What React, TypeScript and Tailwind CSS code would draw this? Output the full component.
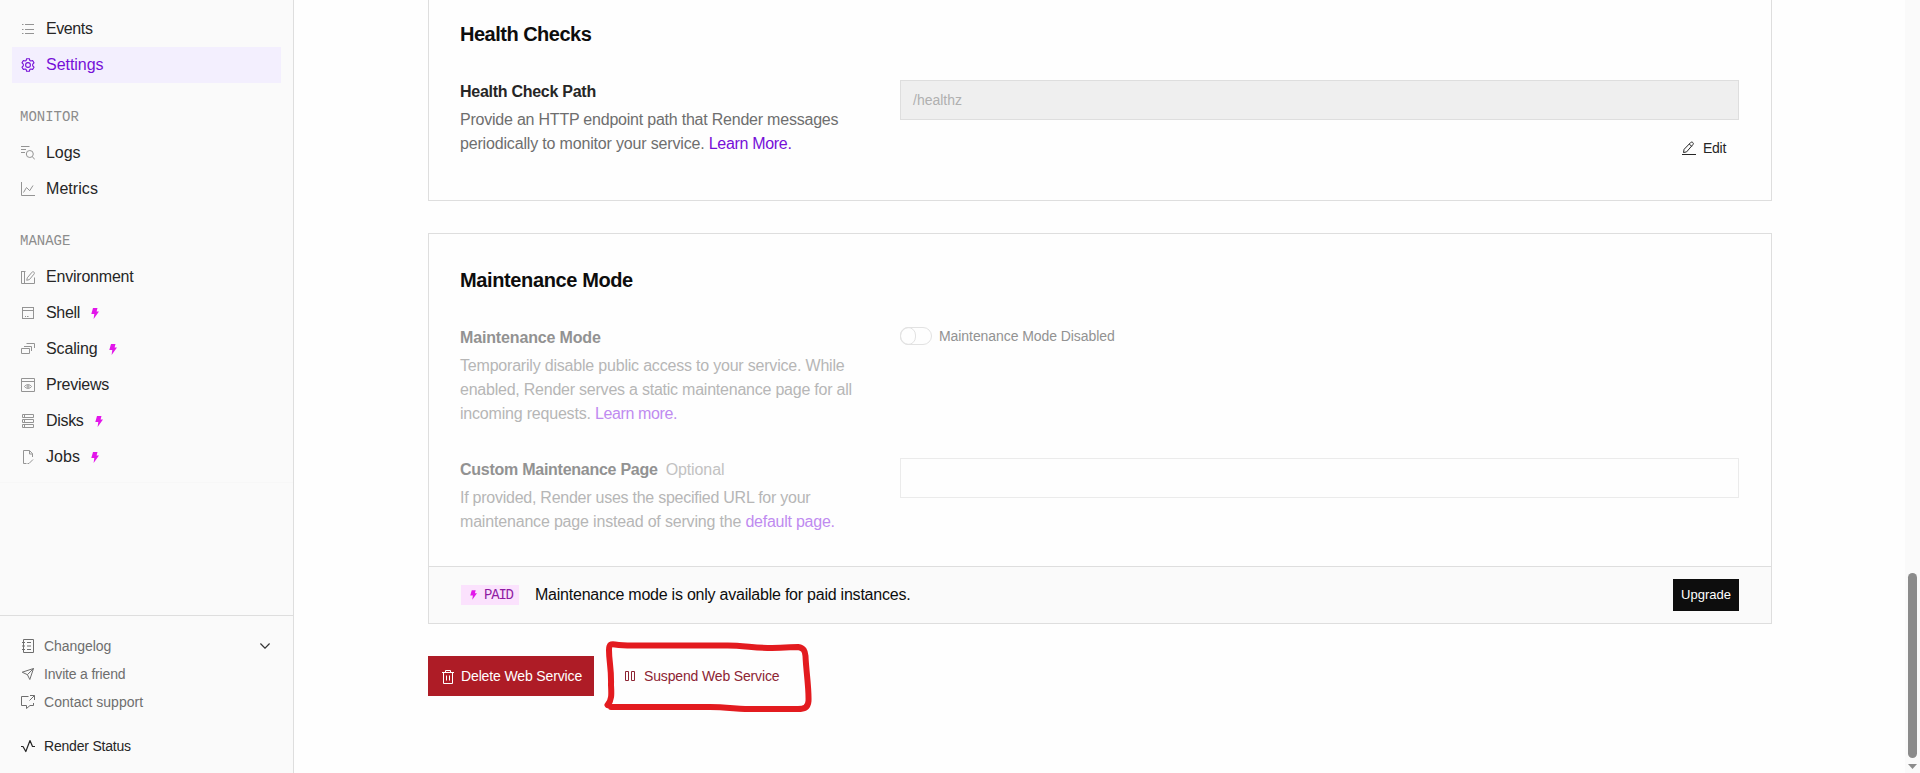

import type { ReactNode } from 'react';

function Icon({ children, className = '', sw = 1 }: { children: ReactNode; className?: string; sw?: number }) {
  return (
    <svg viewBox="0 0 14 14" fill="none" stroke="currentColor" strokeWidth={sw} className={`h-3.5 w-3.5 shrink-0 ${className}`}>
      {children}
    </svg>
  );
}

const EventsIcon = <Icon><path d="M1 2.5h1.5M1 7.5h1.5M1 11.5h1.5M4 2.5h9M4 7.5h9M4 11.5h9" /></Icon>;
const GearIcon = (
  <Icon sw={1.1}>
    <path d="M5.6 .7h2.8l.4 1.7 1.1.6 1.7-.5 1.4 2.4-1.3 1.2v1.8l1.3 1.2-1.4 2.4-1.7-.5-1.1.6-.4 1.7H5.6l-.4-1.7-1.1-.6-1.7.5L1 9.1l1.3-1.2V6.1L1 4.9l1.4-2.4 1.7.5 1.1-.6z" strokeLinejoin="round" />
    <circle cx="7" cy="7" r="2.4" />
  </Icon>
);
const LogsIcon = <Icon><path d="M0 .5h8.5M0 3.5h5M0 6.5h4" /><circle cx="8.8" cy="8" r="3.5" /><path d="M11.3 10.6l2.5 2.9" /></Icon>;
const MetricsIcon = <Icon><path d="M.5 0v13.5H14M2.5 10.5l3-5 3.2 3.2L12 3.5" /></Icon>;
const EnvIcon = <Icon><path d="M3.5 1v12.5M0 1.5h4.5M.5 1v12.5h13V7.5M6.3 7.8l4.6-5.5c.5-.7 1.3-.8 2-.2s.6 1.4.1 2L8.4 9.6l-2.7.7z" /></Icon>;
const ShellIcon = <Icon><rect x="1.5" y="1.5" width="11" height="11" /><path d="M1.5 4.5h11M4 10.5h1M6 10.5h1.5" /></Icon>;
const ScalingIcon = <Icon><path d="M.5 6.5h8v5h-8zM3 4.5h7.5V9M5.5 1.5h8V6" /></Icon>;
const PreviewsIcon = (
  <Icon><path d="M.5 .5h13v13H.5zM.5 3.5h13" /><path d="M3.5 8.5C5 6.1 9 6.1 10.5 8.5 9 10.9 5 10.9 3.5 8.5z" /><circle cx="7" cy="8.5" r=".9" /></Icon>
);
const DisksIcon = <Icon><path d="M1.5 .5h11v3h-11zM1.5 5.5h11v3h-11zM1.5 10.5h11v3h-11zM3.5 .5v3M3.5 5.5v3M3.5 10.5v3" /></Icon>;
const JobsIcon = <Icon><path d="M5.5 13.5h-3V.5h6l3 3.2V7M8.5 .5v3.5h3.2M6.500 13.500h1.500l4-4" /></Icon>;
const ChangelogIcon = <Icon><path d="M2.5 .5h10v13h-10zM1 3.5h3M1 7h3M1 10.5h3M6 3.5h4M6 7h4M6 10.5h4" /></Icon>;
const InviteIcon = <Icon><path d="M1.2 5.2L12.5 1.5 8.8 12.5 6.4 7.7zM6.4 7.7l6.1-6.2" strokeLinejoin="round" /></Icon>;
const SupportIcon = <Icon><path d="M7.5 1.5h-7v9h5v3l3.5-3h3.5V8M9 .5h4.5V5M13.5 .5L8.5 5.5" /></Icon>;
const StatusIcon = <Icon sw={1.2}><path d="M0 7.5h2l2.8 5L9 1.5l2.5 6H14" strokeLinejoin="round" /></Icon>;

function Bolt({ className }: { className: string }) {
  return (
    <svg viewBox="0 0 8 11" className={`shrink-0 text-[#e216ea] ${className}`}>
      <path d="M2 0h4.500L5.600 3.400H8L2.600 11l.7-5H.3z" fill="currentColor" />
    </svg>
  );
}

function NavItem({ icon, label, tracking, active, paid }: { icon: ReactNode; label: string; tracking: string; active?: boolean; paid?: boolean }) {
  return (
    <a className={`mx-3 flex h-9 items-center pl-[9px] ${active ? 'bg-[#f3effe] text-[#760fd8]' : 'text-[#262626]'}`}>
      <span className={active ? '' : 'text-[#949494]'}>{icon}</span>
      <span className={`ml-[11px] text-base leading-6 ${tracking}`}>{label}</span>
      {paid && <Bolt className="ml-[11px] h-[11px] w-[8px]" />}
    </a>
  );
}

function NavLabel({ children }: { children: ReactNode }) {
  return <div className="h-[52px] pt-6 pl-5 font-['Liberation_Mono',monospace] text-sm leading-5 text-[#8c8c8c]">{children}</div>;
}

function FooterItem({ icon, label, className }: { icon: ReactNode; label: string; className: string }) {
  return (
    <a className={`flex h-7 items-center gap-[9px] text-sm ${className}`}>
      {icon}
      <span>{label}</span>
    </a>
  );
}

function Sidebar() {
  return (
    <aside className="flex w-[294px] shrink-0 flex-col border-r border-[#dedede] bg-[#fafafa]">
      <nav className="border-b border-[#f7f7f7] pt-[11px] pb-[7px]">
        <NavItem icon={EventsIcon} label="Events" tracking="tracking-[-0.4px]" />
        <NavItem icon={GearIcon} label="Settings" tracking="tracking-[-0.04px]" active />
        <NavLabel>MONITOR</NavLabel>
        <NavItem icon={LogsIcon} label="Logs" tracking="tracking-[-0.05px]" />
        <NavItem icon={MetricsIcon} label="Metrics" tracking="tracking-[0.06px]" />
        <NavLabel>MANAGE</NavLabel>
        <NavItem icon={EnvIcon} label="Environment" tracking="tracking-[-0.21px]" />
        <NavItem icon={ShellIcon} label="Shell" tracking="tracking-[-0.3px]" paid />
        <NavItem icon={ScalingIcon} label="Scaling" tracking="tracking-[-0.14px]" paid />
        <NavItem icon={PreviewsIcon} label="Previews" tracking="tracking-[-0.24px]" />
        <NavItem icon={DisksIcon} label="Disks" tracking="tracking-[-0.32px]" paid />
        <NavItem icon={JobsIcon} label="Jobs" tracking="tracking-[0.05px]" paid />
      </nav>
      <div className="mt-auto h-[158px] border-t border-[#dedede] pt-4 pr-[23px] pl-[21px]">
        <div className="flex items-center justify-between text-[#6e6e6e]">
          <FooterItem icon={ChangelogIcon} label="Changelog" className="tracking-[-0.05px]" />
          <svg viewBox="0 0 10 6" fill="none" stroke="#333" strokeWidth="1.2" className="h-1.5 w-2.5">
            <path d="M.4 .5L5 5.2 9.6 .5" />
          </svg>
        </div>
        <FooterItem icon={InviteIcon} label="Invite a friend" className="tracking-[-0.18px] text-[#6e6e6e]" />
        <FooterItem icon={SupportIcon} label="Contact support" className="tracking-[0.02px] text-[#6e6e6e]" />
        <FooterItem icon={StatusIcon} label="Render Status" className="mt-4 tracking-[-0.2px] text-[#262626]" />
      </div>
    </aside>
  );
}

function HealthChecks() {
  return (
    <section className="h-[201px] border border-t-0 border-[#dedede] pt-5 pr-8 pl-[31px]">
      <h2 className="text-xl leading-7 font-bold tracking-[-0.5px] text-[#0d0d0d]">Health Checks</h2>
      <div className="mt-8 flex">
        <div className="w-[440px] shrink-0">
          <h3 className="text-base leading-6 font-bold tracking-[-0.27px] text-[#262626]">Health Check Path</h3>
          <p className="mt-1 text-base leading-6 tracking-[-0.22px] whitespace-nowrap text-[#6e6e6e]">
            Provide an HTTP endpoint path that Render messages
            <br />
            <span className="tracking-[-0.17px]">periodically to monitor your service. </span>
            <a className="tracking-[-0.32px] text-[#760fd8]">Learn More.</a>
          </p>
        </div>
        <div className="flex flex-1 flex-col">
          <div className="flex h-10 items-center border border-[#dedede] bg-[#efefef] pl-3 text-sm text-[#b0b0b0]">/healthz</div>
          <button className="mt-3 mr-[13px] flex h-8 items-center gap-[7px] self-end text-sm tracking-[-0.28px] text-[#262626]">
            <Icon>
              <path d="M0 13.500h14M1.500 11.500l.6-3.200 6.600-6.800c.8-.6 1.600-.5 2.200.1s.6 1.300 0 2L4.600 10.900zM7.300 3l2.400 2.400" />
            </Icon>
            Edit
          </button>
        </div>
      </div>
    </section>
  );
}

function MaintenanceMode() {
  return (
    <section className="mt-8 border border-[#dedede]">
      <div className="py-8 pr-8 pl-[31px]">
        <h2 className="text-xl leading-7 font-bold tracking-[-0.38px] text-[#0d0d0d]">Maintenance Mode</h2>
        <div className="mt-8 flex items-start">
          <div className="w-[440px] shrink-0">
            <h3 className="text-base leading-6 font-bold tracking-[-0.15px] text-[#929292]">Maintenance Mode</h3>
            <p className="mt-1 text-base leading-6 whitespace-nowrap text-[#b6b6b6]">
              <span className="tracking-[-0.2px]">Temporarily disable public access to your service. While</span>
              <br />
              <span className="tracking-[-0.23px]">enabled, Render serves a static maintenance page for all</span>
              <br />
              <span className="tracking-[-0.2px]">incoming requests. </span>
              <a className="tracking-[-0.37px] text-[#bf8bf0]">Learn more.</a>
            </p>
          </div>
          <div className="flex h-5 items-center gap-[7px]">
            <span className="flex h-[18px] w-8 rounded-full border border-[#e2e2e2]">
              <span className="-mt-px -ml-px h-[18px] w-4 rounded-full border border-[#e2e2e2]" />
            </span>
            <span className="text-sm tracking-[-0.07px] text-[#929292]">Maintenance Mode Disabled</span>
          </div>
        </div>
        <div className="mt-8 flex">
          <div className="w-[440px] shrink-0">
            <h3 className="flex gap-2 text-base leading-6 font-bold tracking-[-0.26px] text-[#929292]">
              Custom Maintenance Page
              <span className="font-normal tracking-[-0.1px] text-[#c2c2c2]">Optional</span>
            </h3>
            <p className="mt-1 text-base leading-6 whitespace-nowrap text-[#b6b6b6]">
              <span className="tracking-[-0.25px]">If provided, Render uses the specified URL for your</span>
              <br />
              <span className="tracking-[-0.18px]">maintenance page instead of serving the </span>
              <a className="tracking-[-0.25px] text-[#bf8bf0]">default page.</a>
            </p>
          </div>
          <div className="h-10 flex-1 border border-[#ebebeb]" />
        </div>
      </div>
      <div className="flex h-[57px] items-center border-t border-[#dedede] bg-[#fafafa] px-8">
        <span className="flex h-5 w-[58px] items-center bg-[#fbe2fd] pl-[9px]">
          <Bolt className="h-2.5 w-[7px]" />
          <span className="ml-[7px] font-['Liberation_Mono',monospace] text-[14px] leading-5 tracking-[-1.2px] text-[#8f1aa3]">PAID</span>
        </span>
        <span className="ml-4 text-base leading-6 tracking-[-0.23px] text-[#0d0d0d]">Maintenance mode is only available for paid instances.</span>
        <button className="ml-auto flex h-8 w-[66px] items-center justify-center bg-[#0d0d0d] text-[13px] text-white">Upgrade</button>
      </div>
    </section>
  );
}

function ServiceActions() {
  return (
    <div className="mt-8 flex h-10">
      <button className="flex w-[166px] items-center bg-[#ae1c26] pl-[13px] text-sm tracking-[-0.13px] text-white">
        <Icon className="mt-px">
          <path d="M1 2.500h12M4.500 2.500v-2h5v2M2.500 2.500v11h9v-11M5.500 5.500v5M8.500 5.500v5" />
        </Icon>
        <span className="ml-1.5 whitespace-nowrap">Delete Web Service</span>
      </button>
      <div className="relative flex items-center pl-[30px] text-sm text-[#8d2433]">
        <svg viewBox="0 0 12 11" fill="none" stroke="currentColor" className="h-[11px] w-3 shrink-0">
          <path d="M1.500 .5h3v9h-3zM7.500 .5h3v9h-3z" />
        </svg>
        <span className="ml-2 tracking-[-0.15px] whitespace-nowrap">Suspend Web Service</span>
        <svg viewBox="600 635 220 85" fill="none" className="absolute -top-[21px] left-[6px] h-[85px] w-[220px] max-w-none">
          <path
            d="M607.500 705C612 700 611.500 694 611 685C611.500 668 609 662 609 650C609 644 611 644 615 644.500C625 646 632 645.500 640 645.500L725 645.500C740 645 755 648 772 648C785 648 792 647 798 647C804 648 805 651 805.500 656C806 670 809 688 808.500 701C808 708 804 709 798 709L745 709C730 708 722 707 710 707L611 707"
            stroke="#e31b1f"
            strokeWidth="6"
            strokeLinecap="round"
            strokeLinejoin="round"
          />
        </svg>
      </div>
    </div>
  );
}

export default function App() {
  return (
    <div className="flex h-[773px] w-[1920px] overflow-hidden bg-[#fefefe] font-['Liberation_Sans',Arial,sans-serif]">
      <Sidebar />
      <main className="flex-1 pr-[133px] pl-[134px]">
        <HealthChecks />
        <MaintenanceMode />
        <ServiceActions />
      </main>
      <div className="flex w-[15px] shrink-0 flex-col bg-[#fafafa] pt-[573px] pl-[3px]">
        <div className="h-[185px] w-[9px] rounded-full bg-[#8b8b8b]" />
        <svg viewBox="0 0 9 5" className="mt-[6px] h-[5px] w-[9px]">
          <path d="M0 0h9L4.500 5z" fill="#8b8b8b" />
        </svg>
      </div>
    </div>
  );
}
